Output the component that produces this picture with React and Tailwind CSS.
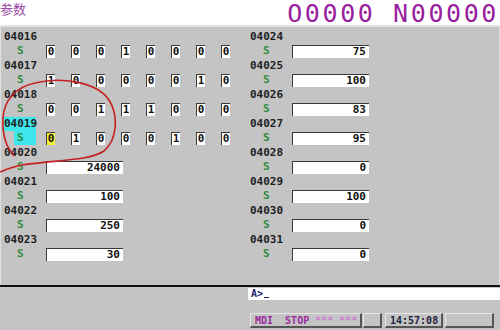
const leftRows = [
  { no: '04016', bits: ['0', '0', '0', '1', '0', '0', '0', '0'] },
  { no: '04017', bits: ['1', '0', '0', '0', '0', '0', '1', '0'] },
  { no: '04018', bits: ['0', '0', '1', '1', '1', '0', '0', '0'] },
  { no: '04019', bits: ['0', '1', '0', '0', '0', '1', '0', '0'], active: true },
  { no: '04020', value: '24000' },
  { no: '04021', value: '100' },
  { no: '04022', value: '250' },
  { no: '04023', value: '30' },
];

const rightRows = [
  { no: '04024', value: '75' },
  { no: '04025', value: '100' },
  { no: '04026', value: '83' },
  { no: '04027', value: '95' },
  { no: '04028', value: '0' },
  { no: '04029', value: '100' },
  { no: '04030', value: '0' },
  { no: '04031', value: '0' },
];

const ParamRow = ({ row }) => (
  <div className="flex flex-col">
    <div
      className={`h-[14px] w-[32px] leading-[14px] text-[11px] font-bold text-[#1e1e1e] ${
        row.active ? 'bg-[#3ee6ee]' : ''
      }`}
    >
      {row.no}
    </div>
    <div className="h-[15px] flex items-center">
      <div className="w-[42px] h-[15px] flex">
        <div
          className={`ml-[10px] w-[22px] h-[14px] leading-[14px] text-[11px] font-bold text-[#2f8a3c] pl-[3px] ${
            row.active ? 'bg-[#3ee6ee]' : ''
          }`}
        >
          S
        </div>
      </div>
      {row.bits ? (
        <div className="flex gap-[16px]">
          {row.bits.map((b, i) => (
            <div
              key={i}
              className={`w-[9px] h-[13px] border-l border-t border-[#3a3a3a] text-[11px] leading-[12px] font-bold text-[#111] text-center ${
                row.active && i === 0 ? 'bg-[#f6f03a]' : 'bg-white'
              }`}
            >
              {b}
            </div>
          ))}
        </div>
      ) : (
        <div className="w-[77px] h-[13px] bg-white border-l border-t border-[#3a3a3a] text-right pr-[3px] text-[11px] leading-[12px] font-bold text-[#111]">
          {row.value}
        </div>
      )}
    </div>
  </div>
);

const StatusBox = ({ className, children }) => (
  <div
    className={`h-[15px] border-t border-l border-[#e6e6e6] border-r-2 border-b-2 border-r-[#555] border-b-[#555] text-[10px] font-bold leading-[13px] ${className}`}
  >
    {children}
  </div>
);

export default function App() {
  return (
    <div className="relative w-[500px] h-[330px] overflow-hidden bg-[#c4c4c4] font-['DejaVu_Sans_Mono',monospace]">
      {/* Header */}
      <div className="h-[25px] bg-white flex justify-between items-start">
        <div className="text-[13px] leading-[19px] -mt-[1px] text-[#9a4aa6] font-['Noto_Sans_CJK_SC',sans-serif]">参数</div>
        <div className="text-[25px] leading-[25px] tracking-[2.6px] text-[#98209e] pr-[1px] pt-[1px]">O0000 N00000</div>
      </div>
      <div className="h-[2px] bg-[#e2e2e2]" />

      {/* Parameter panel */}
      <div className="h-[258px] flex pt-[3px] border-l border-r border-[#dedede]">
        <div className="w-[246px] pl-[3px] flex flex-col">
          {leftRows.map((r) => (
            <ParamRow key={r.no} row={r} />
          ))}
        </div>
        <div className="pl-[3px] flex flex-col">
          {rightRows.map((r) => (
            <ParamRow key={r.no} row={r} />
          ))}
        </div>
      </div>
      <div className="h-[2px] bg-[#111]" />

      {/* Bottom area */}
      <div className="flex">
        <div className="w-[248px]" />
        <div className="flex-1 flex flex-col pt-[1px]">
          <div className="h-[12px] bg-white flex items-center pl-[3px] text-[10px] leading-[12px] font-bold text-[#23236e]">
            <span>A&gt;</span>
            <span className="ml-[1px] mt-[6px] w-[5px] h-[1px] bg-[#23236e]" />
          </div>
          <div className="flex items-center gap-[1px] mt-[13px] pl-[2px]">
            <StatusBox className="w-[112px] pl-[4px] text-[#9a2aa0]">
              MDI&nbsp;&nbsp;STOP <span className="text-[#d080d0]">*** ***</span>
            </StatusBox>
            <StatusBox className="w-[19px]" />
            <StatusBox className="ml-[2px] w-[58px] pl-[4px] text-[#1e1e3c]">14:57:08</StatusBox>
            <StatusBox className="ml-[1px] w-[49px]" />
          </div>
        </div>
      </div>

      {/* Red hand-drawn marking */}
      <svg className="absolute left-0 top-0 pointer-events-none" width="500" height="330">
        <path
          d="M 35 83 C 60 77, 96 81, 109 100 C 119 116, 117 140, 104 151 C 90 161, 52 160, 22 165 C 12 167, 5 170, 0 172"
          fill="none"
          stroke="#c42222"
          strokeWidth="1.6"
        />
        <path
          d="M 35 83 C 16 87, 4 100, 3 118 C 2 136, 7 148, 14 156"
          fill="none"
          stroke="#c42222"
          strokeWidth="1.6"
        />
      </svg>
    </div>
  );
}
